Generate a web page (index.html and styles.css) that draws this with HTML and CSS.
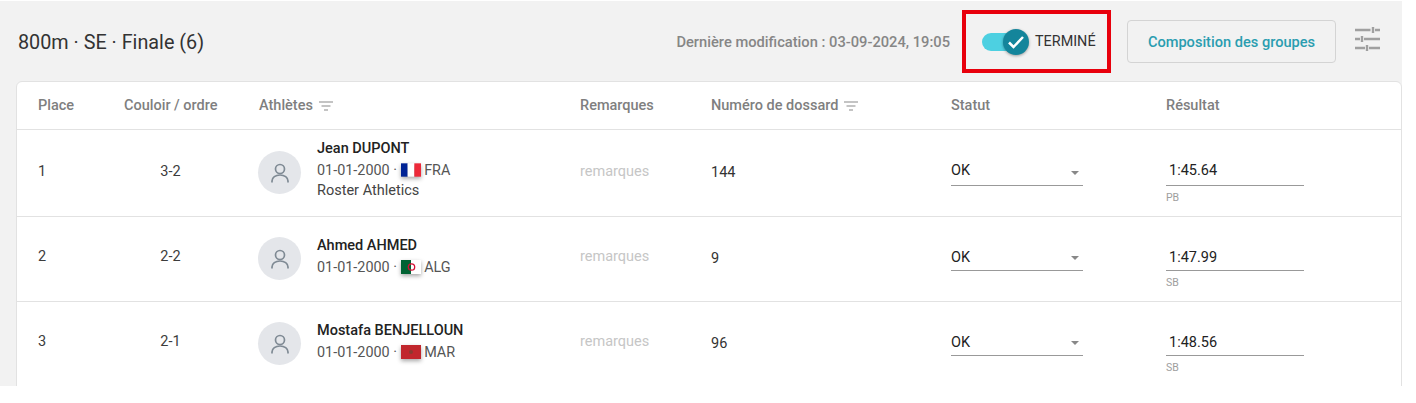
FILE: index.html
```html
<!DOCTYPE html>
<html lang="fr">
<head>
  <meta charset="UTF-8" />
  <title>800m - Finale</title>
  <link rel="stylesheet" href="styles.css">
</head>
<body>
  <div class="panel">
    <header class="topbar">
      <h1>800m · SE · Finale (6)</h1>
      <span class="modified">Dernière modification : 03-09-2024, 19:05</span>
      <div class="status-box">
        <span class="toggle">
          <span class="knob">
            <svg width="20" height="20" viewBox="0 0 20 20"><path d="M3 10.500l4.500 4.500 9.500-10" fill="none" stroke="#fff" stroke-width="2.500"/></svg>
          </span>
        </span>
        <span class="status-label">TERMINÉ</span>
      </div>
      <button class="groups-btn">Composition des groupes</button>
      <svg class="tune" width="25" height="24" viewBox="0 0 25 24"><path d="M0 3h15.500M20 3h5M18 0v6M0 12h5M9 12h16M7 9v6M0 21h10M14 21h11M12 18v6" fill="none" stroke="#a0a0a0" stroke-width="2.400"/></svg>
    </header>

    <section class="card">
      <div class="row head">
        <div>Place</div>
        <div>Couloir / ordre</div>
        <div>Athlètes <svg class="filter" width="14" height="10" viewBox="0 0 14 10"><path d="M0 1h14M2.500 5h9M5 9h4" stroke="#8a8a8a" stroke-width="1.200"/></svg></div>
        <div>Remarques</div>
        <div>Numéro de dossard <svg class="filter" width="14" height="10" viewBox="0 0 14 10"><path d="M0 1h14M2.500 5h9M5 9h4" stroke="#8a8a8a" stroke-width="1.200"/></svg></div>
        <div>Statut</div>
        <div>Résultat</div>
      </div>

      <div class="row athlete first">
        <div>1</div>
        <div class="lane">3-2</div>
        <div class="person">
          <span class="avatar"><svg width="24" height="24" viewBox="0 0 24 24"><circle cx="12" cy="9" r="4.500"/><path d="M4 22.500v-1.500c0-3.500 3.500-6 8-6s8 2.500 8 6v1.500"/></svg></span>
          <div class="info">
            <div class="name">Jean DUPONT</div>
            <div class="meta">01-01-2000 · <svg class="flag" width="20" height="14" viewBox="0 0 3 2"><rect width="1" height="2" fill="#002395"/><rect x="1" width="1" height="2" fill="#fff"/><rect x="2" width="1" height="2" fill="#ed2939"/></svg> FRA</div>
            <div class="club">Roster Athletics</div>
          </div>
        </div>
        <div class="remark">remarques</div>
        <div class="bib">144</div>
        <div class="select"><span>OK</span><i class="caret"></i></div>
        <div class="result"><div class="time">1:45.64</div><div class="note">PB</div></div>
      </div>

      <div class="row athlete">
        <div>2</div>
        <div class="lane">2-2</div>
        <div class="person">
          <span class="avatar"><svg width="24" height="24" viewBox="0 0 24 24"><circle cx="12" cy="9" r="4.500"/><path d="M4 22.500v-1.500c0-3.500 3.500-6 8-6s8 2.500 8 6v1.500"/></svg></span>
          <div class="info">
            <div class="name">Ahmed AHMED</div>
            <div class="meta">01-01-2000 · <svg class="flag" width="20" height="14" viewBox="0 0 20 14"><rect width="10" height="14" fill="#006233"/><rect x="10" width="10" height="14" fill="#fff"/><circle cx="10.500" cy="7" r="3.200" fill="none" stroke="#d21034" stroke-width="1.300"/></svg> ALG</div>
          </div>
        </div>
        <div class="remark">remarques</div>
        <div class="bib">9</div>
        <div class="select"><span>OK</span><i class="caret"></i></div>
        <div class="result"><div class="time">1:47.99</div><div class="note">SB</div></div>
      </div>

      <div class="row athlete">
        <div>3</div>
        <div class="lane">2-1</div>
        <div class="person">
          <span class="avatar"><svg width="24" height="24" viewBox="0 0 24 24"><circle cx="12" cy="9" r="4.500"/><path d="M4 22.500v-1.500c0-3.500 3.500-6 8-6s8 2.500 8 6v1.500"/></svg></span>
          <div class="info">
            <div class="name">Mostafa BENJELLOUN</div>
            <div class="meta">01-01-2000 · <svg class="flag" width="20" height="14" viewBox="0 0 20 14"><rect width="20" height="14" fill="#c1272d"/><circle cx="10" cy="7" r="2" fill="#8a3a30"/></svg> MAR</div>
          </div>
        </div>
        <div class="remark">remarques</div>
        <div class="bib">96</div>
        <div class="select"><span>OK</span><i class="caret"></i></div>
        <div class="result"><div class="time">1:48.56</div><div class="note">SB</div></div>
      </div>
    </section>
  </div>
</body>
</html>
```

FILE: styles.css
```css
html, body {
  margin: 0;
  background: #fff;
}
body {
  font-family: Roboto, "Liberation Sans", sans-serif;
  color: #333;
  height: 403px;
  overflow: hidden;
}
.panel {
  width: 1402px;
  height: 385px;
  margin-top: 1px;
  background: #f2f2f2;
  overflow: hidden;
}
.topbar {
  display: flex;
  align-items: center;
  height: 80px;
  padding: 1px 22px 0 18px;
  box-sizing: border-box;
}
.topbar h1 {
  margin: 0;
  padding-top: 2px;
  font-size: 19.800px;
  font-weight: 400;
  color: #333;
  flex: 1;
}
.modified {
  font-size: 14.700px;
  font-weight: 500;
  color: #868686;
}
.status-box {
  display: flex;
  align-items: center;
  box-sizing: border-box;
  width: 149px;
  height: 63px;
  margin: 0 16px 0 12px;
  padding-left: 16px;
  border: 4px solid #e8000c;
}
.toggle {
  position: relative;
  width: 38px;
  height: 18px;
  border-radius: 9px;
  background: #4dd0e1;
}
.knob {
  position: absolute;
  top: -4px;
  right: -9px;
  width: 26px;
  height: 26px;
  border-radius: 50%;
  background: #14859b;
  box-shadow: 0 1px 3px rgba(0, 0, 0, 0.35);
  display: flex;
  align-items: center;
  justify-content: center;
}
.status-label {
  margin-left: 15px;
  font-size: 14.400px;
  color: #333;
}
.groups-btn {
  width: 209px;
  height: 43px;
  background: #f2f2f2;
  border: 1px solid #d4d4d4;
  border-radius: 4px;
  font-family: inherit;
  font-size: 14.600px;
  font-weight: 500;
  color: #2a9db0;
}
.tune {
  margin: 0 0 5px 19px;
}
.card {
  margin-left: 16px;
  background: #fff;
  border: 1px solid #e2e2e2;
  border-radius: 6px 6px 0 0;
  height: 320px;
}
.row {
  display: grid;
  grid-template-columns: 86px 135px 321px 131px 240px 215px 1fr;
  align-items: center;
  box-sizing: border-box;
  padding-left: 21px;
  border-bottom: 1px solid #e2e2e2;
  font-size: 14.500px;
}
.head {
  height: 48px;
  font-weight: 500;
  color: #7f7f7f;
}
.filter {
  margin-left: 2px;
  vertical-align: -1px;
}
.athlete {
  height: 85px;
  padding-bottom: 6px;
  color: #3c3c3c;
}
.athlete.first {
  height: 87px;
  padding-bottom: 4px;
}
.lane {
  width: 93px;
  text-align: center;
}
.person {
  display: flex;
  align-items: center;
}
.avatar {
  width: 43px;
  height: 43px;
  border-radius: 50%;
  background: #e4e6ea;
  display: flex;
  align-items: center;
  justify-content: center;
  margin: 4px 16px 0 -1px;
}
.first .avatar {
  margin-top: 2px;
}
.avatar svg {
  fill: none;
  stroke: #7f8a94;
  stroke-width: 1.700;
}
.info {
  line-height: 21px;
  margin-bottom: 1px;
}
.first .info {
  margin-bottom: 3px;
}
.name {
  font-weight: 500;
  color: #222;
}
.meta {
  font-size: 14.400px;
  color: #555;
  margin: 1px 0 -1px;
}
.club {
  color: #444;
}
.flag {
  vertical-align: -2px;
  filter: drop-shadow(0 2px 2px rgba(0, 0, 0, 0.35));
}
.remark {
  color: #c6c6c6;
}
.bib {
  color: #333;
  padding-top: 5px;
}
.first .bib {
  padding-top: 3px;
}
.select {
  display: flex;
  align-items: center;
  justify-content: space-between;
  width: 132px;
  height: 30px;
  box-sizing: border-box;
  border-bottom: 1px solid #999;
  color: #222;
  padding-right: 4px;
}
.select span {
  margin-top: 4px;
}
.first .select span {
  margin-top: 0;
}
.caret {
  border: 4px solid transparent;
  border-top-color: #888;
  border-bottom-width: 0;
  margin-top: 4px;
}
.result {
  width: 138px;
  margin-top: 17px;
}
.time {
  height: 31px;
  line-height: 30px;
  box-sizing: border-box;
  padding: 3px 0 0 3px;
  border-bottom: 1px solid #999;
  color: #222;
}
.first .time {
  padding-top: 1px;
}
.note {
  font-size: 10.500px;
  color: #9e9e9e;
  margin-top: 6px;
  line-height: 12px;
}
```
